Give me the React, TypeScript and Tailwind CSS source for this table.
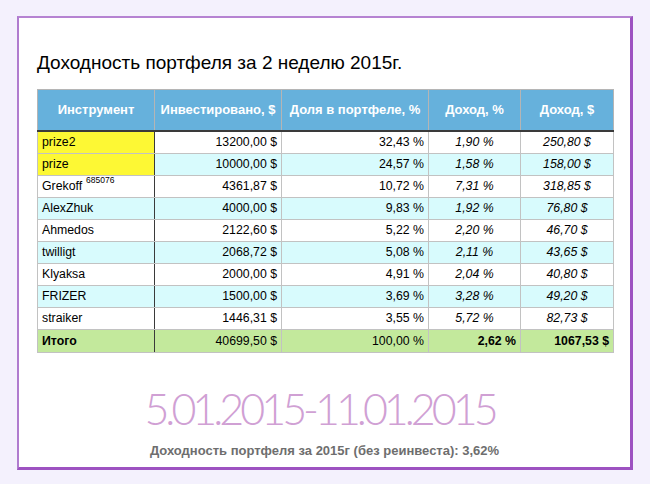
import React from "react";

type Row = {
  name: string;
  sup?: string;
  inv: string;
  share: string;
  pct: string;
  inc: string;
  bg: string;
  nameBg?: string;
};

const rows: Row[] = [
  { name: "prize2", inv: "13200,00 $", share: "32,43 %", pct: "1,90 %", inc: "250,80 $", bg: "bg-white", nameBg: "bg-[#fdf834]" },
  { name: "prize", inv: "10000,00 $", share: "24,57 %", pct: "1,58 %", inc: "158,00 $", bg: "bg-[#d8fbfd]", nameBg: "bg-[#fdf834]" },
  { name: "Grekoff", sup: "685076", inv: "4361,87 $", share: "10,72 %", pct: "7,31 %", inc: "318,85 $", bg: "bg-white" },
  { name: "AlexZhuk", inv: "4000,00 $", share: "9,83 %", pct: "1,92 %", inc: "76,80 $", bg: "bg-[#d8fbfd]" },
  { name: "Ahmedos", inv: "2122,60 $", share: "5,22 %", pct: "2,20 %", inc: "46,70 $", bg: "bg-white" },
  { name: "twilligt", inv: "2068,72 $", share: "5,08 %", pct: "2,11 %", inc: "43,65 $", bg: "bg-[#d8fbfd]" },
  { name: "Klyaksa", inv: "2000,00 $", share: "4,91 %", pct: "2,04 %", inc: "40,80 $", bg: "bg-white" },
  { name: "FRIZER", inv: "1500,00 $", share: "3,69 %", pct: "3,28 %", inc: "49,20 $", bg: "bg-[#d8fbfd]" },
  { name: "straiker", inv: "1446,31 $", share: "3,55 %", pct: "5,72 %", inc: "82,73 $", bg: "bg-white" },
];

export default function App() {
  return (
    <div
      className="w-[650px] h-[484px] bg-[#f4f1fd] pt-[16px] px-[17px] overflow-hidden"
      style={{ fontFamily: '"Liberation Sans", Arial, sans-serif' }}
    >
      <div className="h-[454px] bg-white border-t-2 border-l-2 border-r-[3px] border-b-[3px] border-t-[#b683d2] border-l-[#b07ccf] border-r-[#9d52c1] border-b-[#9d52c1] flex flex-col">
        <div className="pt-[34px] pl-[18px] text-[19px] leading-[22px] text-black">
          Доходность портфеля за 2 неделю 2015г.
        </div>
        <div className="mt-[15px] ml-[18px]">
          <table className="table-fixed border-collapse w-[576px] text-[12.3px] text-black">
            <colgroup>
              <col className="w-[117px]" />
              <col className="w-[127px]" />
              <col className="w-[147px]" />
              <col className="w-[92px]" />
              <col className="w-[93px]" />
            </colgroup>
            <thead>
              <tr className="h-[41px] bg-[#66b1dc] text-white font-bold text-[13px]">
                <th className="border border-[#b5b5b5] text-center">Инструмент</th>
                <th className="border border-[#b5b5b5] text-center">Инвестировано, $</th>
                <th className="border border-[#b5b5b5] text-center">Доля в портфеле, %</th>
                <th className="border border-[#b5b5b5] text-center">Доход, %</th>
                <th className="border border-[#b5b5b5] text-center">Доход, $</th>
              </tr>
            </thead>
            <tbody>
              {rows.map((r, i) => (
                <tr
                  key={r.name}
                  className={`${i === 0 ? "h-[23px] border-t-2 border-t-[#3a3a3a]" : "h-[22px]"} ${r.bg}`}
                >
                  <td className={`border border-[#c2c2c2] border-r-[#3a3a3a] pl-[4px] ${r.nameBg ?? ""}`}>
                    {r.name}
                    {r.sup && <sup className="text-[8.5px] ml-[4px] align-[3px]">{r.sup}</sup>}
                  </td>
                  <td className="border border-[#c2c2c2] border-l-[#3a3a3a] text-right pr-[4px]">{r.inv}</td>
                  <td className="border border-[#c2c2c2] text-right pr-[4px]">{r.share}</td>
                  <td className="border border-[#c2c2c2] text-center italic">{r.pct}</td>
                  <td className="border border-[#c2c2c2] text-center italic">{r.inc}</td>
                </tr>
              ))}
              <tr className="h-[23px] bg-[#c3e99c]">
                <td className="border border-[#c2c2c2] border-r-[#3a3a3a] pl-[4px] font-bold">Итого</td>
                <td className="border border-[#c2c2c2] border-l-[#3a3a3a] text-right pr-[4px]">40699,50 $</td>
                <td className="border border-[#c2c2c2] text-right pr-[4px]">100,00 %</td>
                <td className="border border-[#c2c2c2] text-right pr-[4px] font-bold">2,62 %</td>
                <td className="border border-[#c2c2c2] text-right pr-[4px] font-bold">1067,53 $</td>
              </tr>
            </tbody>
          </table>
        </div>
        <div
          className="mt-[31px] text-center text-[43px] leading-[50px] font-light text-[#d0a0d4] tracking-[-4px] pr-[10px]"
          style={{ fontFamily: 'Lato, "Open Sans", sans-serif' }}
        >
          5.01.2015-11.01.2015
        </div>
        <div className="mt-[9px] text-center text-[13px] leading-[16px] font-bold text-[#6e6e6e]">
          Доходность портфеля за 2015г (без реинвеста): 3,62%
        </div>
      </div>
    </div>
  );
}
